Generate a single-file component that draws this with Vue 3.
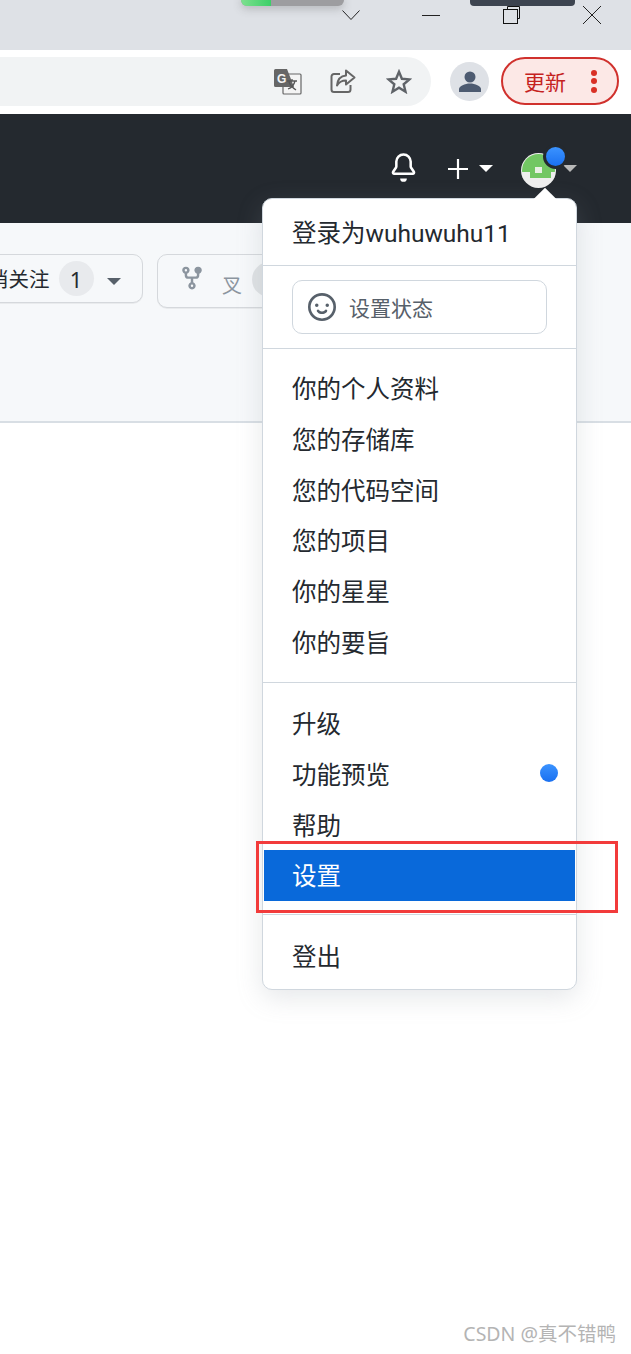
<template>
  <div class="page">
    <div class="titlebar">
      <div class="tab-thumb green"><span class="bar"></span></div>
      <svg class="chevron" width="20" height="12" viewBox="0 0 20 12"><path d="M1.5 1.5 L10 10.5 L18.5 1.5" fill="none" stroke="#222" stroke-width="1" /></svg>
      <span class="minimize"></span>
      <div class="tab-thumb dark"></div>
      <svg class="restore" width="20" height="20" viewBox="0 0 20 20"><path d="M5.5 3V.5h12v12H15" fill="none" stroke="#111" stroke-width="1" /><rect x="1.5" y="3.5" width="14" height="14" fill="none" stroke="#111" stroke-width="1" /></svg>
      <svg class="close" width="20" height="20" viewBox="0 0 20 20"><path d="M1 1 L19 19 M19 1 L1 19" stroke="#222" stroke-width="1" /></svg>
    </div>

    <div class="toolbar">
      <div class="omnibox">
        <svg class="o-icon translate" width="28" height="27" viewBox="0 0 28 27">
          <rect x="9" y="5" width="18" height="20" rx="1" fill="#f4f4f4" stroke="#666" stroke-width="1.2" />
          <path d="M1.5 0H13l7 18H1.5A1.5 1.5 0 0 1 0 16.5v-15A1.5 1.5 0 0 1 1.5 0z" fill="#666" />
          <text x="3" y="14" class="g-letter">G</text>
          <path d="M13 12h10M18 10v2M21 12c-1 4-4 7-7 8M15 13c1 3 4 6 7 8" fill="none" stroke="#555" stroke-width="1.3" />
        </svg>
        <svg class="o-icon share" width="26" height="25" viewBox="0 0 26 25">
          <path d="M10 5H4a2.500 2.500 0 0 0-2.500 2.500v13A2.500 2.500 0 0 0 4 23h14a2.500 2.500 0 0 0 2.500-2.500V16" fill="none" stroke="#666" stroke-width="2" />
          <path d="M16 1.500 24.500 8.500 16 15.500v-4c-4 0-7 1.500-9 5 .5-5.500 3.500-9.500 9-10z" fill="#f1f3f4" stroke="#666" stroke-width="2" stroke-linejoin="round" />
        </svg>
        <svg class="o-icon star" width="26" height="25" viewBox="0 0 26 25">
          <path d="M13 2.800 15.900 9.800 23.500 10.400 17.700 15.300 19.500 22.700 13 18.700 6.500 22.700 8.300 15.300 2.500 10.400 10.100 9.800z" fill="none" stroke="#5f6368" stroke-width="2.400" stroke-linejoin="miter" />
        </svg>
      </div>
      <div class="profile">
        <svg width="24" height="22" viewBox="0 0 24 22">
          <circle cx="12" cy="6" r="5.500" fill="#4d5b71" />
          <path d="M1 21v-3c0-3 6-5.500 11-5.500s11 2.500 11 5.500v3z" fill="#4d5b71" />
        </svg>
      </div>
      <div class="update">
        <span>更新</span>
        <span class="dots"><i></i><i></i><i></i></span>
      </div>
    </div>

    <header class="gh-nav">
      <svg class="bell" width="27" height="29" viewBox="0 0 16 17"><path fill="#fff" d="M8 17a2 2 0 0 0 1.985-1.750c.017-.137-.097-.250-.235-.250h-3.500c-.138 0-.252.113-.235.250A2 2 0 0 0 8 17z" /><path fill="#fff" d="M8 1.500A3.500 3.500 0 0 0 4.500 5v2.947c0 .346-.102.683-.294.970l-1.703 2.556a.018.018 0 0 0-.003.010l.001.006c0 .002.002.004.004.006a.017.017 0 0 0 .006.004l.007.001h10.964l.007-.001a.018.018 0 0 0 .010-.010l.001-.006a.018.018 0 0 0-.003-.010l-1.703-2.554a1.750 1.750 0 0 1-.294-.970V5A3.500 3.500 0 0 0 8 1.500zM3 5a5 5 0 0 1 10 0v2.947c0 .050.015.098.042.139l1.703 2.555A1.518 1.518 0 0 1 13.482 13H2.518a1.518 1.518 0 0 1-1.263-2.360l1.703-2.554A.250.250 0 0 0 3 7.947V5z" /></svg>
      <svg class="plus" width="20" height="20" viewBox="0 0 20 20"><path d="M10 0v20M0 10h20" stroke="#fff" stroke-width="2.200" /></svg>
      <span class="caret white"></span>
      <div class="avatar">
        <svg width="35" height="35" viewBox="0 0 35 35">
          <defs><clipPath id="avatar-clip"><circle cx="17.500" cy="17.500" r="16.500" /></clipPath></defs>
          <circle cx="17.500" cy="17.500" r="17.500" fill="#eeeeee" />
          <path clip-path="url(#avatar-clip)" d="M0 0h35v19h-5v6H9v-6H0z" fill="#72c763" />
          <rect x="14" y="14" width="7" height="6" fill="#e8f0e4" />
        </svg>
        <span class="notify"></span>
      </div>
      <span class="caret gray"></span>
    </header>

    <section class="subhead">
      <div class="gh-btn watch">
        <span class="label">消关注</span>
        <span class="counter">1</span>
        <span class="caret darkcaret"></span>
      </div>
      <div class="gh-btn fork">
        <svg width="26" height="26" viewBox="0 0 16 16"><path fill="#8c959f" d="M5 3.250a.750.750 0 1 1-1.500 0 .750.750 0 0 1 1.500 0zm0 2.122a2.250 2.250 0 1 0-1.500 0v.878A2.250 2.250 0 0 0 5.750 8.500h1.500v2.128a2.251 2.251 0 1 0 1.500 0V8.500h1.500a2.250 2.250 0 0 0 2.250-2.250v-.878a2.250 2.250 0 1 0-1.500 0v.878a.750.750 0 0 1-.750.750h-4.500A.750.750 0 0 1 5 6.250v-.878zm3.750 7.378a.750.750 0 1 1-1.500 0 .750.750 0 0 1 1.500 0zm3-8.750a.750.750 0 1 0 0-1.500.750.750 0 0 0 0 1.500z" /></svg>
        <span class="fork-label">叉</span>
        <span class="counter muted"></span>
      </div>
    </section>

    <!-- dropdown from the avatar -->
    <div class="menu">
      <span class="arrow"></span>
      <div class="signed-in">登录为<b>wuhuwuhu11</b></div>
      <div class="status-wrap">
        <div class="status">
          <svg width="28" height="28" viewBox="0 0 16 16"><path fill="#57606a" d="M1.500 8a6.500 6.500 0 1 1 13 0 6.500 6.500 0 0 1-13 0zM8 0a8 8 0 1 0 0 16A8 8 0 0 0 8 0zM5 8a1 1 0 1 0 0-2 1 1 0 0 0 0 2zm7-1a1 1 0 1 1-2 0 1 1 0 0 1 2 0zM5.320 9.636a.750.750 0 0 1 1.038.175l.007.009c.103.118.220.222.350.310.264.178.683.370 1.285.370.602 0 1.020-.192 1.285-.371.130-.088.247-.192.350-.310l.007-.008a.750.750 0 1 1 1.222.870c-.160.220-.340.420-.545.600-.630.500-1.370.730-2.319.730-.946 0-1.652-.308-2.126-.630a3.320 3.320 0 0 1-.715-.657.750.750 0 0 1 .161-1.088z" /></svg>
          <span>设置状态</span>
        </div>
      </div>
      <ul class="group first">
        <li v-for="item in profileLinks" :key="item">{{ item }}</li>
      </ul>
      <ul class="group second">
        <li v-for="item in siteLinks" :key="item.label" :class="{ active: item.active }">
          {{ item.label }}
          <span v-if="item.dot" class="preview-dot"></span>
        </li>
      </ul>
      <div class="logout">登出</div>
    </div>

    <div class="highlight"></div>
    <div class="watermark">CSDN @真不错鸭</div>
  </div>
</template>

<script setup>
const profileLinks = ['你的个人资料', '您的存储库', '您的代码空间', '您的项目', '你的星星', '你的要旨']

const siteLinks = [
  { label: '升级' },
  { label: '功能预览', dot: true },
  { label: '帮助' },
  { label: '设置', active: true }
]
</script>

<style>
html,
body {
  margin: 0;
  background: #fff;
}
</style>

<style scoped>
.page {
  position: relative;
  width: 631px;
  height: 1354px;
  overflow: hidden;
  background: #fff;
  font-family: "Noto Sans", "Noto Sans CJK SC", sans-serif;
  color: #24292f;
}

.titlebar {
  position: relative;
  height: 50px;
  background: #dee1e6;
}

.tab-thumb {
  position: absolute;
  top: -4px;
}

.tab-thumb.green {
  left: 241px;
  width: 103px;
  height: 10px;
  background: #9d9da0;
  border-radius: 0 0 6px 6px;
  box-shadow: 0 3px 8px rgba(90, 90, 90, 0.3);
  overflow: hidden;
}

.tab-thumb .bar {
  display: block;
  width: 30px;
  height: 100%;
  background: linear-gradient(90deg, #7de08f, #3ccf68);
}

.tab-thumb.dark {
  left: 470px;
  width: 105px;
  height: 10px;
  background: #3d4450;
  border-radius: 0 0 4px 4px;
}

.chevron,
.minimize,
.restore,
.close {
  position: absolute;
}

.chevron {
  left: 341px;
  top: 9px;
}

.minimize {
  left: 422px;
  top: 15px;
  width: 18px;
  height: 1px;
  background: #222;
}

.restore {
  left: 502px;
  top: 6px;
}

.close {
  left: 582px;
  top: 5px;
}

.toolbar {
  display: flex;
  align-items: center;
  height: 64px;
  background: #fff;
}

.omnibox {
  position: relative;
  flex: none;
  width: 431px;
  height: 49px;
  margin-top: -1px;
  background: #f1f3f4;
  border-radius: 0 25px 25px 0;
}

.o-icon {
  position: absolute;
}

.translate {
  left: 274px;
  top: 12px;
}

.g-letter {
  font: bold 12px "Liberation Sans", sans-serif;
  fill: #f4f4f4;
}

.share {
  left: 330px;
  top: 12px;
}

.star {
  left: 386px;
  top: 12px;
}

.profile {
  display: flex;
  align-items: flex-end;
  justify-content: center;
  box-sizing: border-box;
  width: 39px;
  height: 39px;
  margin: -1px 0 0 19px;
  padding-bottom: 8px;
  border-radius: 50%;
  background: #dee1e6;
}

.update {
  display: flex;
  align-items: center;
  box-sizing: border-box;
  width: 118px;
  height: 48px;
  margin: -2px 0 0 12px;
  padding-left: 21px;
  border: 2px solid #d0312d;
  border-radius: 25px;
  background: #fce8e6;
  color: #c5221f;
  font-size: 21px;
  font-family: "Noto Sans CJK SC", sans-serif;
}

.dots {
  display: flex;
  flex-direction: column;
  gap: 2.5px;
  margin-left: 25px;
}

.dots i {
  display: block;
  width: 6px;
  height: 6px;
  border-radius: 50%;
  background: #d93025;
}

.gh-nav {
  display: flex;
  align-items: center;
  box-sizing: border-box;
  height: 109px;
  padding: 0 0 0 390px;
  background: #24292f;
}

.bell {
  margin-top: -2px;
}

.plus {
  margin-left: 31px;
}

.caret {
  display: block;
  width: 0;
  height: 0;
  border-style: solid;
  border-width: 7px 7px 0;
  border-color: transparent;
}

.caret.white {
  margin-left: 11px;
  border-top-color: #fff;
}

.caret.gray {
  margin-left: 7px;
  border-top-color: #b8b8b8;
}

.avatar {
  position: relative;
  width: 35px;
  height: 35px;
  margin-left: 28px;
  margin-top: 3px;
}

.avatar svg {
  display: block;
}

.notify {
  position: absolute;
  left: 22px;
  top: -9px;
  box-sizing: content-box;
  width: 19px;
  height: 19px;
  border: 3px solid #24292f;
  border-radius: 50%;
  background: linear-gradient(#3b93ff, #1a70f0);
}

.subhead {
  display: flex;
  align-items: flex-start;
  gap: 14px;
  box-sizing: border-box;
  height: 200px;
  padding: 31px 0 0;
  background: #f6f8fa;
  border-bottom: 2px solid #d8dee4;
  overflow: hidden;
}

.gh-btn {
  display: flex;
  align-items: center;
  flex: none;
  box-sizing: border-box;
  border: 1px solid #d5d8dc;
  border-radius: 10px;
  background: #f6f8fa;
  box-shadow: 0 1px 0 rgba(27, 31, 36, 0.06);
}

.watch {
  width: 183px;
  height: 49px;
  margin-left: -40px;
  padding-left: 27px;
}

.watch .label {
  font-size: 20.5px;
  margin-top: -2px;
  font-family: "Noto Sans CJK SC", sans-serif;
}

.counter {
  display: flex;
  align-items: center;
  justify-content: center;
  flex: none;
  width: 35px;
  height: 35px;
  margin-left: 9px;
  border-radius: 50%;
  background: #e8eaed;
  font-size: 22px;
}

.darkcaret {
  margin: 6px 0 0 13px;
  border-top-color: #57606a;
}

.fork {
  width: 160px;
  height: 54px;
  padding-left: 21px;
  align-items: flex-start;
  padding-top: 10px;
}

.fork-label {
  margin: 8px 0 0 17px;
  color: #8c959f;
  font-size: 20px;
  line-height: 24px;
  font-family: "Noto Sans CJK SC", sans-serif;
}

.counter.muted {
  margin: -3px 0 0 10px;
  background: #dfe2e5;
}

.menu {
  position: absolute;
  left: 262px;
  top: 198px;
  box-sizing: border-box;
  width: 315px;
  height: 792px;
  border: 1px solid #d0d7de;
  border-radius: 10px;
  background: #fff;
  box-shadow: 0 8px 26px rgba(140, 149, 159, 0.22);
  font-size: 24.5px;
  font-family: "Noto Sans", "Noto Sans CJK SC", sans-serif;
}

.arrow {
  position: absolute;
  left: 274px;
  top: -8px;
  width: 16px;
  height: 16px;
  background: #fff;
  transform: rotate(45deg);
}

.signed-in {
  position: relative;
  box-sizing: border-box;
  height: 67px;
  padding: 0 0 0 29px;
  line-height: 68px;
  border-bottom: 1px solid #d0d7de;
  white-space: nowrap;
}

.signed-in b {
  font-weight: 400;
  font-family: Roboto, sans-serif;
}

.status-wrap {
  box-sizing: border-box;
  height: 83px;
  padding: 14px 29px 0;
  border-bottom: 1px solid #d0d7de;
}

.status {
  display: flex;
  align-items: center;
  gap: 13px;
  box-sizing: border-box;
  width: 255px;
  height: 54px;
  padding-left: 15px;
  border: 1px solid #d0d7de;
  border-radius: 10px;
  color: #57606a;
  font-size: 21px;
}

.group {
  margin: 0;
  padding: 15px 0 0;
  list-style: none;
}

.group li {
  position: relative;
  height: 50.8px;
  padding-left: 29px;
  line-height: 50.8px;
}

.group.first {
  height: 334px;
  box-sizing: border-box;
  border-bottom: 1px solid #d0d7de;
}

.group.second {
  height: 232px;
  box-sizing: border-box;
  padding-top: 15px;
  border-bottom: 1px solid #d0d7de;
}

.group.second li {
  line-height: 52.6px;
}

.group li.active {
  margin: 0 1px;
  padding-left: 28px;
  background: #0969da;
  color: #fff;
}

.preview-dot {
  position: absolute;
  right: 18px;
  top: 15px;
  width: 18px;
  height: 18px;
  border-radius: 50%;
  background: linear-gradient(#3b93ff, #1a70f0);
}

.logout {
  height: 74px;
  padding-left: 29px;
  line-height: 84px;
}

.highlight {
  position: absolute;
  left: 256px;
  top: 841px;
  box-sizing: border-box;
  width: 362px;
  height: 72px;
  border: 3px solid #f23b3b;
}

.watermark {
  position: absolute;
  right: 15px;
  top: 1321px;
  color: #b4b4b4;
  font-size: 19.5px;
  line-height: 26px;
  font-family: "Noto Sans", "Noto Sans CJK SC", sans-serif;
}
</style>
